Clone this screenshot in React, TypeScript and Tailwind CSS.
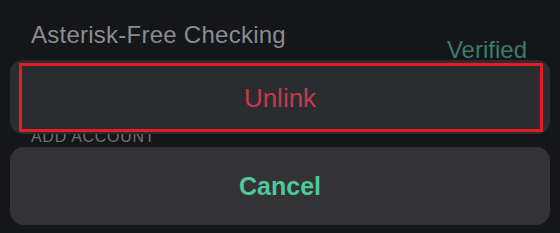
import React from 'react';

const font = { fontFamily: '"Liberation Sans", Arial, sans-serif' };

export default function App() {
  return (
    <div className="relative w-[560px] h-[233px] overflow-hidden bg-[#141619]" style={font}>
      {/* list behind the sheet */}
      <div className="flex flex-col pt-[23px] pl-[31px] pr-[33px]">
        <div className="flex items-start justify-between">
          <span className="text-[24px] leading-[24px] tracking-[0.25px] text-[#8a8c8f]">Asterisk-Free Checking</span>
          <span className="mt-[15px] text-[24px] leading-[24px] text-[#3f7a66]">Verified</span>
        </div>
        <span className="mt-[67px] text-[16px] leading-[16px] tracking-[0.7px] text-[#6e7073]">ADD ACCOUNT</span>
      </div>

      {/* action sheet */}
      <div className="absolute inset-0 flex flex-col gap-[13px] px-[10px] pt-[60px]">
        <div className="relative flex h-[74px] items-center justify-center rounded-[13px] bg-[#2b2c2f] pt-[2px]">
          <span className="text-[26px] leading-none text-[#c23b4d]">Unlink</span>
          <div className="absolute left-[9px] top-[3px] h-[69px] w-[524px] border-[3px] border-[#e41d25]" />
        </div>
        <div className="flex h-[78px] items-center justify-center rounded-[14px] bg-[#333336]">
          <span className="text-[25px] font-bold leading-none text-[#4fc99a]">Cancel</span>
        </div>
      </div>
    </div>
  );
}
